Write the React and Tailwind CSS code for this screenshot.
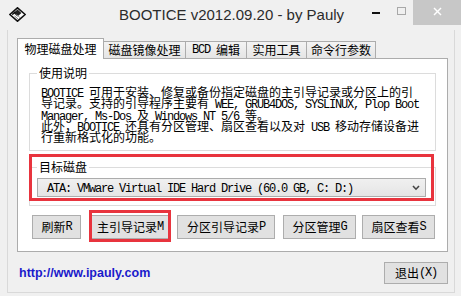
import React from 'react';

const CJK = "font-['Noto_Sans_CJK_SC',sans-serif]";

// split a string into ascii / cjk runs so latin text gets the narrow mono look
function Mixed({ text }) {
  const runs = text.match(/[\x00-\x7f]+|[^\x00-\x7f]+/g) || [];
  return runs.map((r, i) =>
    /^[\x00-\x7f]/.test(r)
      ? <span key={i} className="font-['Liberation_Mono',monospace] tracking-[-1.2px] whitespace-pre">{r}</span>
      : <span key={i} className={CJK}>{r}</span>
  );
}

const INFO = [
  "BOOTICE 可用于安装、修复或备份指定磁盘的主引导记录或分区上的引",
  "导记录。支持的引导程序主要有 WEE, GRUB4DOS, SYSLINUX, Plop Boot",
  "Manager, Ms-Dos 及 Windows NT 5/6 等。",
  "此外，BOOTICE 还具有分区管理、扇区查看以及对 USB 移动存储设备进",
  "行重新格式化的功能。",
];

const TABS = [
  { label: "物理磁盘处理", w: "w-[87px]", active: true },
  { label: "磁盘镜像处理", w: "w-[83px] -ml-px" },
  { label: "BCD 编辑",     w: "w-[62px] -ml-px" },
  { label: "实用工具",     w: "w-[61px] -ml-px" },
  { label: "命令行参数",   w: "w-[70px] -ml-px" },
];

const BUTTONS = [
  { label: "刷新R",         cls: "ml-[3px] w-[49px]" },
  { label: "主引导记录M",   cls: "ml-[9px] w-[80px]" },
  { label: "分区引导记录P", cls: "ml-[7px] w-[98px]" },
  { label: "分区管理G",     cls: "ml-[8px] w-[73px]" },
  { label: "扇区查看S",     cls: "ml-[6px] w-[73px]" },
];

function AppIcon() {
  return (
    <svg width="17" height="15" viewBox="0 0 17 15">
      <polygon points="8.5,0.8 16.2,7.5 8.5,14.2 0.8,7.5" fill="#fff" stroke="#111" strokeWidth="1.6" />
      <polygon points="8.5,2.6 12.4,6 8.5,9.4 4.6,6" fill="#222" />
      <line x1="5.5" y1="9" x2="9" y2="12" stroke="#777" strokeWidth="1" />
      <line x1="7.5" y1="7.6" x2="11" y2="10.6" stroke="#999" strokeWidth="1" />
      <line x1="3.2" y1="7.6" x2="6.4" y2="4.8" stroke="#111" strokeWidth="1.4" />
    </svg>
  );
}

export default function App() {
  return (
    <div className={`w-[461px] h-[296px] bg-[#f0f0f0] overflow-hidden text-black ${CJK}`}>

      {/* TITLE BAR */}
      <div className="h-[30px] flex items-start">
        <div className="ml-[9px] mt-[7px]"><AppIcon /></div>
        <div className="ml-[93px] mt-[6px] font-['Liberation_Sans',sans-serif] text-[15px] leading-[18px] text-[#2b2b2b] whitespace-nowrap">
          BOOTICE v2012.09.20 - by Pauly
        </div>
        <div className="ml-auto flex items-start">
          <div className="w-[26px] h-[25px] flex justify-center pt-[12px]">
            <div className="w-[8px] h-[2px] bg-[#111]" />
          </div>
          <div className="w-[24px] h-[25px] flex justify-center pt-[7px]">
            <div className="w-[9px] h-[8px] border border-[#a8a8a8]" />
          </div>
          <div className="w-[48px] h-[25px] bg-[#c7c7c7] flex items-center justify-center">
            <svg width="9" height="9" viewBox="0 0 9 9" className="mt-[-2px]">
              <line x1="1" y1="1" x2="8" y2="8" stroke="#fff" strokeWidth="1.4" />
              <line x1="8" y1="1" x2="1" y2="8" stroke="#fff" strokeWidth="1.4" />
            </svg>
          </div>
        </div>
      </div>

      {/* CLIENT AREA */}
      <div className="ml-[7px] w-[448px] h-[263px] border-x border-b border-[#d9d9d9] pt-[8px] pl-[9px]">

        {/* TABS */}
        <div className="flex items-end h-[20px]">
          {TABS.map((t, i) => (
            <div key={i}
              className={`${t.w} flex items-center justify-center text-[12px] leading-none border border-b-0 border-[#acacac] ${t.active ? 'h-[21px] -mb-px relative z-10 bg-white' : 'h-[17px] bg-linear-to-b from-[#f3f3f3] to-[#e5e5e5]'}`}>
              <Mixed text={t.label} />
            </div>
          ))}
        </div>

        {/* PANEL */}
        <div className="relative w-[431px] h-[194px] bg-white border border-[#acacac] px-[11px]">

          <fieldset className="mt-[7px] border border-[#dcdcdc] px-[11px] pb-[8px]">
            <legend className="-ml-[4px] px-[2px] text-[12px] leading-[14px]">使用说明</legend>
            <div className="pt-[6px] text-[12px]">
              {INFO.map((line, i) => (
                <div key={i} className="h-[11.25px] leading-[11.25px] whitespace-nowrap">
                  <Mixed text={line} />
                </div>
              ))}
            </div>
          </fieldset>

          <fieldset className="mt-[9px] border border-[#dcdcdc] pl-[7px] pr-[9px] pb-[8px]">
            <legend className="-ml-[0px] px-[2px] text-[12px] leading-[14px]">目标磁盘</legend>
            <div className="mt-[4px] h-[19px] border border-[#acacac] bg-linear-to-b from-[#f0f0f0] to-[#e5e5e5] flex items-center justify-between pl-[9px] pr-[5px] text-[12px] leading-none">
              <div className="whitespace-nowrap"><Mixed text="ATA: VMware Virtual IDE Hard Drive (60.0 GB, C: D:)" /></div>
              <svg width="8" height="6" viewBox="0 0 8 6">
                <polyline points="1,1 4,4.2 7,1" fill="none" stroke="#444" strokeWidth="1.6" />
              </svg>
            </div>
          </fieldset>

          <div className="mt-[9px] flex">
            {BUTTONS.map((b, i) => (
              <div key={i}
                className={`${b.cls} h-[24px] border border-[#adadad] bg-[#e1e1e1] flex items-center justify-center text-[12px] leading-none whitespace-nowrap`}>
                <Mixed text={b.label} />
              </div>
            ))}
          </div>

          {/* red annotation boxes */}
          <div className="absolute left-[11px] top-[95px] w-[405px] h-[47px] border-[3px] border-[#e8343e]" />
          <div className="absolute left-[71px] top-[151px] w-[82px] h-[32px] border-[3px] border-[#e8343e]" />
        </div>

        {/* FOOTER */}
        <div className="mt-[10px] w-[431px] flex items-center justify-between">
          <span className="pl-[2px] font-['Liberation_Sans',sans-serif] font-bold text-[12.5px] text-[#1a1acb]">
            http://www.ipauly.com
          </span>
          <div className="w-[64px] h-[22px] border border-[#adadad] bg-[#e1e1e1] flex items-center justify-center text-[12px] leading-none">
            <Mixed text="退出(X)" />
          </div>
        </div>
      </div>
    </div>
  );
}
